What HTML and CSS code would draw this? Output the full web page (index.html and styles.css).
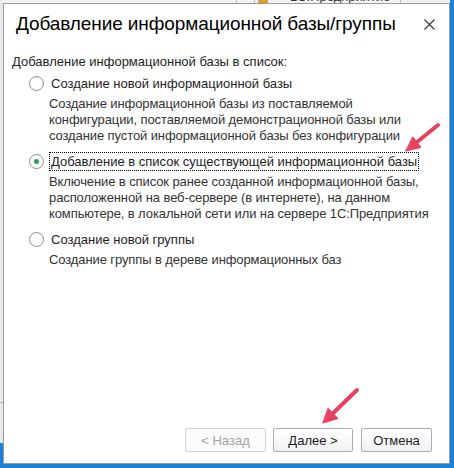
FILE: index.html
```html
<!DOCTYPE html>
<html lang="ru">
<head>
<meta charset="utf-8">
<title>Добавление информационной базы/группы</title>
<link rel="stylesheet" href="styles.css">
</head>
<body>
<div class="desktop">
  <div class="bg-top">
    <span class="bg-sep s1"></span>
    <span class="bg-sep s2"></span>
    <span class="bg-icon"></span>
    <span class="bg-text">1С:Предприятие</span>
    <span class="bg-sep s3"></span>
  </div>
  <div class="bg-left"><span class="bg-line"></span><span class="bg-r">r</span></div>
  <div class="bg-right"></div>
  <div class="bg-bottom"></div>

  <div class="dialog">
    <div class="titlebar">
      <span class="title">Добавление информационной базы/группы</span>
      <svg class="close" viewBox="0 0 11 11" width="11" height="11"><path d="M0.5 0.5 L10.5 10.5 M10.5 0.5 L0.5 10.5" stroke="#333" stroke-width="1.1" fill="none"/></svg>
    </div>
    <div class="content">
      <div class="intro">Добавление информационной базы в список:</div>

      <div class="option first"><span class="radio"></span><span class="label">Создание новой информационной базы</span></div>
      <div class="desc">Создание информационной базы из поставляемой<br>конфигурации, поставляемой демонстрационной базы или<br>создание пустой информационной базы без конфигурации</div>

      <div class="option"><span class="radio checked"></span><span class="label focused">Добавление в список существующей информационной базы</span></div>
      <div class="desc">Включение в список ранее созданной информационной базы,<br>расположенной на веб-сервере (в интернете), на данном<br>компьютере, в локальной сети или на сервере 1С:Предприятия</div>

      <div class="option"><span class="radio"></span><span class="label">Создание новой группы</span></div>
      <div class="desc">Создание группы в дереве информационных баз</div>
    </div>
    <div class="footer">
      <button class="btn back" disabled>&lt; Назад</button>
      <button class="btn next">Далее &gt;</button>
      <button class="btn cancel">Отмена</button>
    </div>
  </div>

  <svg class="arrows" width="454" height="468" viewBox="0 0 454 468">
    <g fill="#e8405f" stroke="#e8405f" stroke-linecap="round" stroke-linejoin="round">
      <line x1="438" y1="125" x2="416.5" y2="142.5" stroke-width="4"/>
      <polygon points="406,151 421,147.5 413,137" stroke-width="1"/>
      <line x1="357" y1="390" x2="333.5" y2="412.8" stroke-width="4"/>
      <polygon points="323,423 338,418.5 328.3,408.5" stroke-width="1"/>
    </g>
  </svg>
</div>
</body>
</html>
```

FILE: styles.css
```css
html, body {
  margin: 0;
  padding: 0;
}
body {
  width: 454px;
  height: 468px;
  overflow: hidden;
  background: #f0f0f0;
  font-family: "Liberation Sans", Arial, sans-serif;
}
.desktop {
  position: relative;
  width: 454px;
  height: 468px;
  overflow: hidden;
}

/* background windows peeking around the dialog */
.bg-top {
  position: absolute;
  left: 0;
  top: 0;
  width: 403px;
  height: 4px;
  background: #f4f4f4;
  overflow: hidden;
}
.bg-sep {
  position: absolute;
  top: 0;
  width: 1px;
  height: 4px;
  background: #b9b9b9;
}
.s1 { left: 236px; }
.s2 { left: 254px; }
.s3 { left: 400px; }
.bg-icon {
  position: absolute;
  left: 258px;
  top: 0;
  width: 10px;
  height: 3px;
  background: #e59a2e;
}
.bg-text {
  position: absolute;
  left: 290px;
  top: -11px;
  font-size: 13px;
  line-height: 15px;
  color: #333;
}
.bg-left {
  position: absolute;
  left: 0;
  top: 0;
  width: 3px;
  height: 468px;
  background: linear-gradient(#e9e9e9 0, #e9e9e9 443px, #1a82d6 443px);
  overflow: hidden;
}
.bg-line {
  position: absolute;
  left: 0;
  top: 402px;
  width: 3px;
  height: 1px;
  background: #a8a8a8;
}
.bg-r {
  position: absolute;
  left: -5px;
  top: 405px;
  font-size: 13px;
  line-height: 15px;
  color: #7a1f2a;
}
.bg-right {
  position: absolute;
  left: 450px;
  top: 0;
  width: 4px;
  height: 468px;
  background: #1a82d6;
}
.bg-bottom {
  position: absolute;
  left: 0;
  top: 464px;
  width: 454px;
  height: 4px;
  background: #1a82d6;
}

/* dialog window */
.dialog {
  position: absolute;
  left: 3px;
  top: 3px;
  width: 447px;
  height: 461px;
  box-sizing: border-box;
  border: 1px solid #9a9a9a;
  background: #fff;
  display: flex;
  flex-direction: column;
}
.titlebar {
  height: 40px;
  display: flex;
  align-items: center;
  justify-content: space-between;
  padding: 0 14px 0 12px;
}
.title {
  font-size: 19px;
  letter-spacing: -0.1px;
  color: #000;
  white-space: nowrap;
}
.close {
  display: block;
}
.content {
  flex: 1;
  padding: 10px 0 0 8px;
  font-size: 13px;
  color: #1e1e1e;
}
.intro {
  line-height: 16px;
  white-space: nowrap;
}
.option {
  display: flex;
  align-items: center;
  height: 20px;
  margin-top: 7px;
  padding-left: 17px;
}
.option.first {
  margin-top: 3px;
}
.radio {
  box-sizing: border-box;
  width: 15px;
  height: 15px;
  border: 1px solid #8c8c8c;
  border-radius: 50%;
  background: #fff;
  margin-right: 5px;
  display: flex;
  align-items: center;
  justify-content: center;
  flex: none;
}
.radio.checked::after {
  content: "";
  width: 5px;
  height: 5px;
  border-radius: 50%;
  background: #24a14b;
}
.label {
  padding: 1px 1px 1px 1px;
  border: 1px dotted transparent;
  line-height: 15px;
  white-space: nowrap;
}
.label.focused {
  border-color: #000;
}
.desc {
  margin-top: 3px;
  padding-left: 37px;
  line-height: 16px;
  letter-spacing: -0.1px;
  color: #333;
  white-space: nowrap;
}

/* buttons */
.footer {
  display: flex;
  justify-content: flex-end;
  padding: 0 17px 11px 0;
}
.btn {
  box-sizing: border-box;
  height: 24px;
  padding: 0;
  border: 1px solid #acacac;
  border-radius: 2px;
  background: linear-gradient(#ffffff, #f1f1f1);
  font-family: "Liberation Sans", Arial, sans-serif;
  font-size: 13px;
  color: #1e1e1e;
}
.back {
  width: 81px;
  margin-right: 7px;
  color: #a3a3a3;
  border-color: #d3d3d3;
  background: #fbfbfb;
}
.next {
  width: 80px;
  margin-right: 8px;
}
.cancel {
  width: 71px;
}

.arrows {
  position: absolute;
  left: 0;
  top: 0;
  pointer-events: none;
}
```
